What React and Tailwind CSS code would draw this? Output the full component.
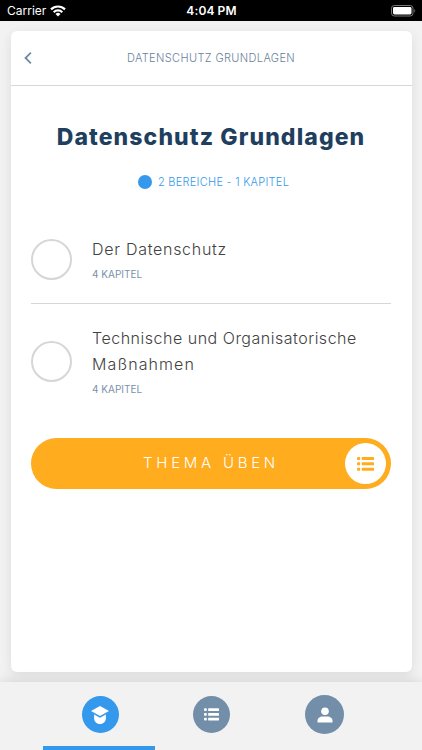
const CHAPTERS = [
  { id: 1, title: ['Der Datenschutz'], tracking: ['tracking-[0.72px]'], count: '4 KAPITEL' },
  {
    id: 2,
    title: ['Technische und Organisatorische', 'Maßnahmen'],
    tracking: ['tracking-[0.51px]', 'tracking-[1.1px]'],
    count: '4 KAPITEL',
  },
]

function ListIcon({ className }) {
  return (
    <svg viewBox="0 0 17 14" className={className} fill="currentColor">
      {[0, 5.35, 10.7].map(y => (
        <g key={y}>
          <rect x="0" y={y} width="3.2" height="3" rx="1" />
          <rect x="4.7" y={y} width="12.3" height="3" rx="0.4" />
        </g>
      ))}
    </svg>
  )
}

function StatusBar() {
  return (
    <div className="grid h-[21px] shrink-0 grid-cols-3 items-center bg-black pl-[7px] pr-[6px] text-xs text-white">
      <div className="flex items-center gap-1">
        <span>Carrier</span>
        <svg viewBox="0 0 16 12" className="h-3 w-4" fill="none" stroke="currentColor" strokeWidth="2.2">
          <path d="M1 4.4a9.9 9.9 0 0 1 14 0" />
          <path d="M3.7 7.2a6.1 6.1 0 0 1 8.6 0" />
          <path d="M8 11.6 5.5 9.1a3.5 3.5 0 0 1 5 0z" fill="currentColor" stroke="none" />
        </svg>
      </div>
      <span className="text-center font-semibold tracking-[0.1px]">4:04 PM</span>
      <svg viewBox="0 0 25 12" className="h-3 w-[25px] justify-self-end">
        <rect x="0.5" y="0.5" width="21.5" height="10.5" rx="2.8" fill="none" stroke="#777" />
        <rect x="2" y="2" width="18.5" height="7.5" rx="1.4" fill="#fff" />
        <path d="M23.3 4v3.6c1.2-.5 1.2-3.1 0-3.6z" fill="#777" />
      </svg>
    </div>
  )
}

function ChapterRow({ chapter }) {
  return (
    <div className="flex items-center">
      <div className="mr-[20px] size-[41px] shrink-0 rounded-full border-2 border-[#d6d6d6]" />
      <div>
        {chapter.title.map((line, i) => (
          <div key={line} className={`whitespace-nowrap text-[16px] leading-[26px] font-[350] text-[#424242] ${chapter.tracking[i]}`}>
            {line}
          </div>
        ))}
        <div className="mt-[4px] text-[10px] leading-[16px] text-[#7a92aa]">{chapter.count}</div>
      </div>
    </div>
  )
}

export default function App() {
  return (
    <div className="flex h-[750px] w-[422px] flex-col overflow-hidden bg-[#f2f2f2] font-['Inter',sans-serif]">
      <StatusBar />

      <main className="flex-1 px-[10.5px] pt-[10px]">
        <div className="h-[641px] rounded-[6px] bg-white shadow-[0_3px_12px_rgba(0,0,0,0.09)]">
          <header className="grid h-[55px] grid-cols-[34px_1fr_34px] items-center border-b border-[#d3d9df]">
            <svg viewBox="0 0 8 12" className="ml-[13px] h-3 w-2" fill="none" stroke="#6f8ba5" strokeWidth="1.8">
              <path d="M6.9 0.7 1.5 6l5.4 5.3" />
            </svg>
            <span className="text-center text-[11px] font-light tracking-[0.37px] text-[#68829b]">DATENSCHUTZ GRUNDLAGEN</span>
          </header>

          <section className="px-[20.5px]">
            <h1 className="mt-[36px] whitespace-nowrap text-center text-[23px] leading-[30px] font-extrabold tracking-[1.1px] text-[#1f3f5e]">
              Datenschutz Grundlagen
            </h1>
            <div className="mt-[22px] flex items-center justify-center gap-[6px] pl-[5px] text-[11px] leading-[16px] font-light text-[#3498ec]">
              <span className="size-[14px] rounded-full bg-[#3498ec]" />
              <span className="tracking-[0.27px]">2 BEREICHE - 1 KAPITEL</span>
            </div>

            <div className="mt-[46px] border-b border-[#d6d6d6] pb-[21px]">
              <ChapterRow chapter={CHAPTERS[0]} />
            </div>
            <div className="pt-[21px]">
              <ChapterRow chapter={CHAPTERS[1]} />
            </div>

            <button className="mt-[41px] grid h-[51px] w-full grid-cols-[46px_1fr_46px] items-center rounded-full bg-[#ffac1e] text-white">
              <span className="col-start-2 text-[15px] font-light tracking-[3.75px]">THEMA ÜBEN</span>
              <span className="flex size-[41px] items-center justify-center rounded-full bg-white text-[#ffac1e]">
                <ListIcon className="h-[14px] w-[17px]" />
              </span>
            </button>
          </section>
        </div>
      </main>

      <nav className="z-10 grid h-[68px] shrink-0 grid-cols-3 bg-[#f2f2f2] px-[43px] shadow-[0_0_12px_rgba(0,0,0,0.14)]">
        <div className="flex justify-center border-b-4 border-[#3498ec] pt-[14px] pl-[2px]">
          <div className="flex size-[37px] items-center justify-center rounded-full bg-[#3498ec] text-white">
            <svg viewBox="0 0 18 18" className="size-[18px]" fill="currentColor">
              <path d="M9 0 18 5 9 10 0 5z" />
              <path d="M3.1 8.6 9 11.8l5.9-3.2v3.4c0 3.6-2.4 6-5.9 6s-5.9-2.4-5.9-6z" />
            </svg>
          </div>
        </div>
        <div className="flex justify-center pt-[14px]">
          <div className="flex size-[37px] items-center justify-center rounded-full bg-[#728ea8] text-white">
            <ListIcon className="h-[13px] w-[15px]" />
          </div>
        </div>
        <div className="flex justify-center pt-[13px] pl-[3px]">
          <div className="flex size-[39px] items-center justify-center rounded-full bg-[#728ea8] text-white">
            <svg viewBox="0 0 16 16" className="size-4" fill="currentColor">
              <circle cx="8" cy="4.3" r="3.8" />
              <path d="M.5 15.4v-1.6c0-2.6 2.4-4.3 5.1-4.3h4.8c2.7 0 5.1 1.7 5.1 4.3v1.6z" />
            </svg>
          </div>
        </div>
      </nav>
    </div>
  )
}
